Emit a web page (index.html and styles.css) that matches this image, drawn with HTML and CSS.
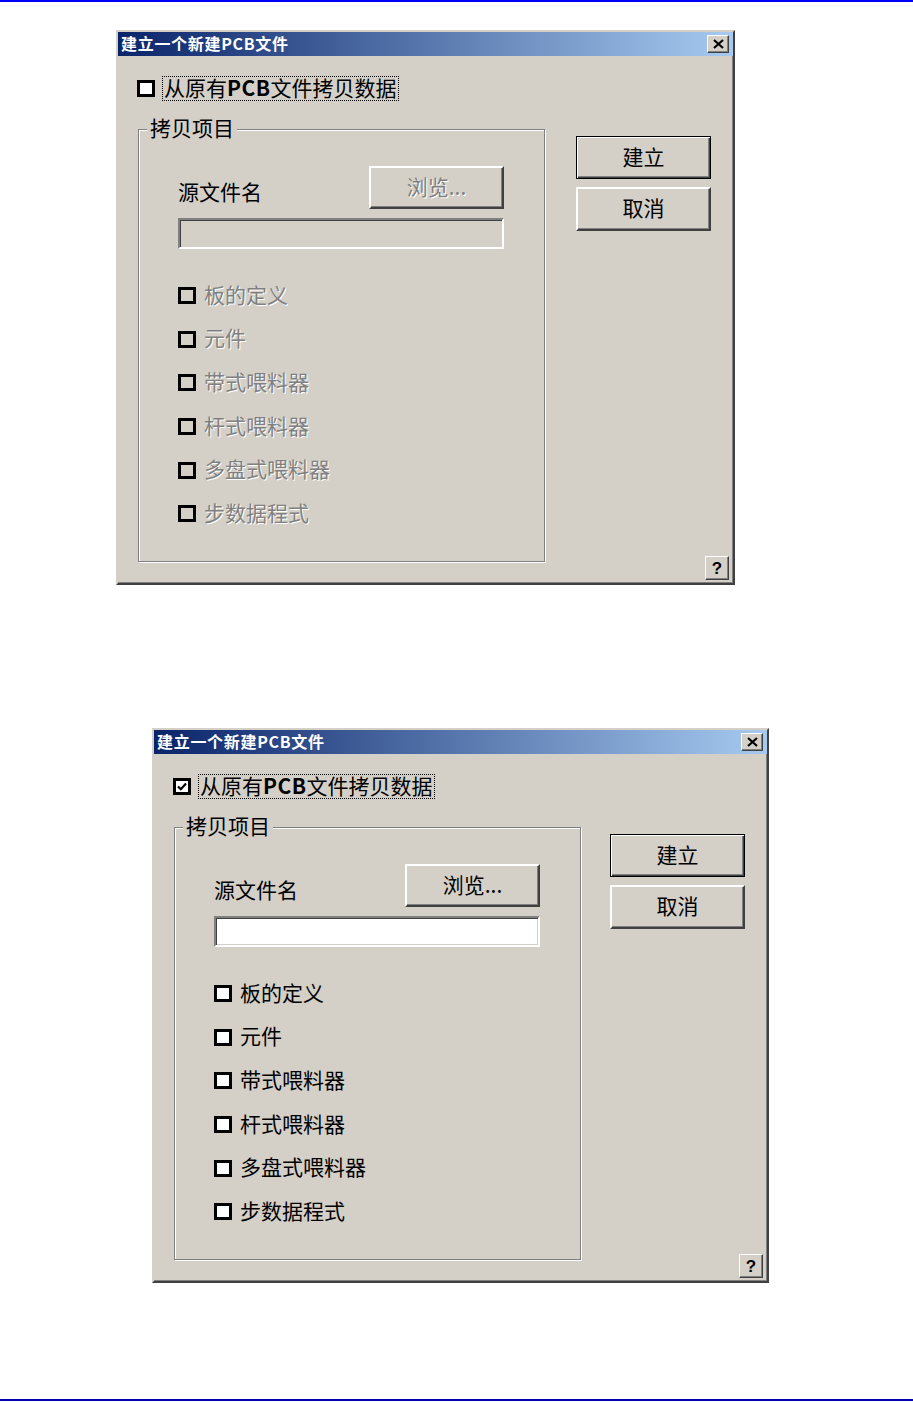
FILE: index.html
```html
<!DOCTYPE html>
<html lang="zh-CN">
<head>
<meta charset="utf-8">
<title>建立一个新建PCB文件</title>
<link rel="stylesheet" href="styles.css">
</head>
<body>
<div class="page">
  <div class="rule rule-top"></div>

  <div class="dialog dialog-a is-disabled">
    <div class="titlebar">
      <span class="title">建立一个新建PCB文件</span>
      <span class="close-btn"><svg width="11" height="10" viewBox="0 0 11 10"><path d="M1 1 L10 9 M10 1 L1 9" stroke="#000" stroke-width="2.2" fill="none"/></svg></span>
    </div>
    <div class="dlg-body">
      <div class="main-col">
        <div class="check-row top-check"><span class="box"></span><span class="focus-label">从原有<b class="latin">PCB</b>文件拷贝数据</span></div>
        <fieldset class="group">
          <legend class="group-title">拷贝项目</legend>
          <div class="group-inner">
            <div class="file-row"><span class="file-label">源文件名</span><span class="btn btn-browse"><span class="btn-text">浏览...</span></span></div>
            <div class="text-input"></div>
            <ul class="item-list">
              <li class="check-row item"><span class="box"></span><span class="item-label">板的定义</span></li>
              <li class="check-row item"><span class="box"></span><span class="item-label">元件</span></li>
              <li class="check-row item"><span class="box"></span><span class="item-label">带式喂料器</span></li>
              <li class="check-row item"><span class="box"></span><span class="item-label">杆式喂料器</span></li>
              <li class="check-row item"><span class="box"></span><span class="item-label">多盘式喂料器</span></li>
              <li class="check-row item"><span class="box"></span><span class="item-label">步数据程式</span></li>
            </ul>
          </div>
        </fieldset>
      </div>
      <div class="side-col">
        <span class="btn btn-default">建立</span>
        <span class="btn btn-cancel">取消</span>
        <span class="help-btn">?</span>
      </div>
    </div>
  </div>

  <div class="dialog dialog-b">
    <div class="titlebar">
      <span class="title">建立一个新建PCB文件</span>
      <span class="close-btn"><svg width="11" height="10" viewBox="0 0 11 10"><path d="M1 1 L10 9 M10 1 L1 9" stroke="#000" stroke-width="2.2" fill="none"/></svg></span>
    </div>
    <div class="dlg-body">
      <div class="main-col">
        <div class="check-row top-check"><span class="box checked"><svg width="10" height="9" viewBox="0 0 10 9"><path d="M1 4.5 L3.8 7.2 L9 1.5" stroke="#000" stroke-width="2.2" fill="none"/></svg></span><span class="focus-label">从原有<b class="latin">PCB</b>文件拷贝数据</span></div>
        <fieldset class="group">
          <legend class="group-title">拷贝项目</legend>
          <div class="group-inner">
            <div class="file-row"><span class="file-label">源文件名</span><span class="btn btn-browse"><span class="btn-text">浏览...</span></span></div>
            <div class="text-input"></div>
            <ul class="item-list">
              <li class="check-row item"><span class="box"></span><span class="item-label">板的定义</span></li>
              <li class="check-row item"><span class="box"></span><span class="item-label">元件</span></li>
              <li class="check-row item"><span class="box"></span><span class="item-label">带式喂料器</span></li>
              <li class="check-row item"><span class="box"></span><span class="item-label">杆式喂料器</span></li>
              <li class="check-row item"><span class="box"></span><span class="item-label">多盘式喂料器</span></li>
              <li class="check-row item"><span class="box"></span><span class="item-label">步数据程式</span></li>
            </ul>
          </div>
        </fieldset>
      </div>
      <div class="side-col">
        <span class="btn btn-default">建立</span>
        <span class="btn btn-cancel">取消</span>
        <span class="help-btn">?</span>
      </div>
    </div>
  </div>

  <div class="rule rule-bottom"></div>
</div>
</body>
</html>
```
FILE: styles.css
```css
html, body {
  margin: 0;
  padding: 0;
  background: #ffffff;
}

.page {
  width: 913px;
  min-height: 1402px;
  display: flex;
  flex-direction: column;
  font-family: "Noto Sans CJK SC", "Liberation Sans", sans-serif;
  color: #000;
}

.rule-top {
  height: 2px;
  background: #0000ff;
}

.rule-bottom {
  margin-top: auto;
  margin-bottom: 1px;
  height: 2px;
  background: #0000b0;
}

.dialog {
  box-sizing: border-box;
  width: 619px;
  height: 555px;
  background: #d4d0c8;
  border: 2px solid;
  border-color: #d4d0c8 #404040 #404040 #d4d0c8;
  box-shadow: inset -1px -1px #808080;
  display: flex;
  flex-direction: column;
}

.dialog-a {
  margin-top: 28px;
  margin-left: 116px;
}

.dialog-b {
  margin-top: 143px;
  margin-left: 152px;
  width: 617px;
}

.titlebar {
  height: 24px;
  flex: none;
  display: flex;
  align-items: center;
  justify-content: space-between;
  padding: 0 4px 0 3px;
  background: linear-gradient(to right, #0a246a, #a6caf0);
}

.title {
  color: #fff;
  font-weight: 700;
  font-size: 16px;
  line-height: 20px;
  letter-spacing: 0.7px;
  padding-bottom: 2px;
}

.close-btn {
  box-sizing: border-box;
  width: 22px;
  height: 18px;
  background: #d4d0c8;
  border: 1px solid;
  border-color: #fff #404040 #404040 #fff;
  box-shadow: inset -1px -1px #808080;
  display: flex;
  align-items: center;
  justify-content: center;
}

.dlg-body {
  flex: 1;
  display: flex;
  padding: 20px 4px 3px 19px;
}

.main-col {
  width: 408px;
  display: flex;
  flex-direction: column;
}

.side-col {
  margin-left: auto;
  width: 153px;
  display: flex;
  flex-direction: column;
  align-items: flex-start;
}

.check-row {
  display: flex;
  align-items: center;
}

.top-check {
  height: 25px;
}

.box {
  box-sizing: border-box;
  width: 18px;
  height: 17px;
  flex: none;
  border: 3px solid #000;
  background: #fff;
  display: flex;
  align-items: center;
  justify-content: center;
}

.is-disabled .item .box {
  background: #d4d0c8;
}

.focus-label {
  margin-left: 7px;
  border: 1px dotted #000;
  padding: 0 1px 2px;
  font-size: 21px;
  line-height: 21px;
  white-space: nowrap;
}

.latin {
  font-weight: 700;
  letter-spacing: 0.5px;
}

.group {
  box-sizing: border-box;
  margin: 16px 0 0 1px;
  padding: 0;
  width: 407px;
  height: 445px;
  border: 1px solid #808080;
  box-shadow: inset 1px 1px #fff, 1px 1px #fff;
  min-width: 0;
}

.group-title {
  margin-left: 8px;
  padding: 0 3px 3px;
  font-size: 21px;
  line-height: 21px;
  background: #d4d0c8;
}

.group-inner {
  margin-left: 39px;
  width: 326px;
}

.file-row {
  margin-top: 25px;
  display: flex;
  justify-content: space-between;
  align-items: flex-end;
}

.file-label {
  font-size: 21px;
  line-height: 24px;
  margin-bottom: 6px;
}

.btn {
  box-sizing: border-box;
  width: 135px;
  height: 43px;
  padding-bottom: 4px;
  background: #d4d0c8;
  border: 2px solid;
  border-color: #fff #404040 #404040 #fff;
  box-shadow: inset -1px -1px #808080;
  display: flex;
  align-items: center;
  justify-content: center;
  font-size: 21px;
  line-height: 24px;
}

.btn-default {
  margin-top: 60px;
  border: 1px solid #000;
  box-shadow: inset 1px 1px #fff, inset -1px -1px #404040, inset -2px -2px #808080;
}

.btn-cancel {
  margin-top: 8px;
  height: 44px;
}

.is-disabled .btn-browse .btn-text,
.is-disabled .item-label {
  color: #808080;
  text-shadow: 1px 1px 0 #fff;
}

.text-input {
  box-sizing: border-box;
  margin-top: 9px;
  width: 326px;
  height: 31px;
  background: #fff;
  border: 2px solid;
  border-color: #808080 #fff #fff #808080;
  box-shadow: inset 1px 1px #404040, inset -1px -1px #d4d0c8;
}

.is-disabled .text-input {
  background: #d4d0c8;
}

.item-list {
  list-style: none;
  margin: 25px 0 0;
  padding: 0;
}

.item {
  height: 43.6px;
}

.item-label {
  margin-left: 8px;
  font-size: 21px;
  line-height: 24px;
  padding-bottom: 4px;
  white-space: nowrap;
}

.help-btn {
  margin-top: auto;
  align-self: flex-end;
  box-sizing: border-box;
  width: 24px;
  height: 24px;
  border: 1px solid;
  border-color: #fff #404040 #404040 #fff;
  box-shadow: inset -1px -1px #808080;
  display: flex;
  align-items: center;
  justify-content: center;
  font-family: "Liberation Sans", sans-serif;
  font-weight: 700;
  font-size: 17px;
  line-height: 1;
}
```
